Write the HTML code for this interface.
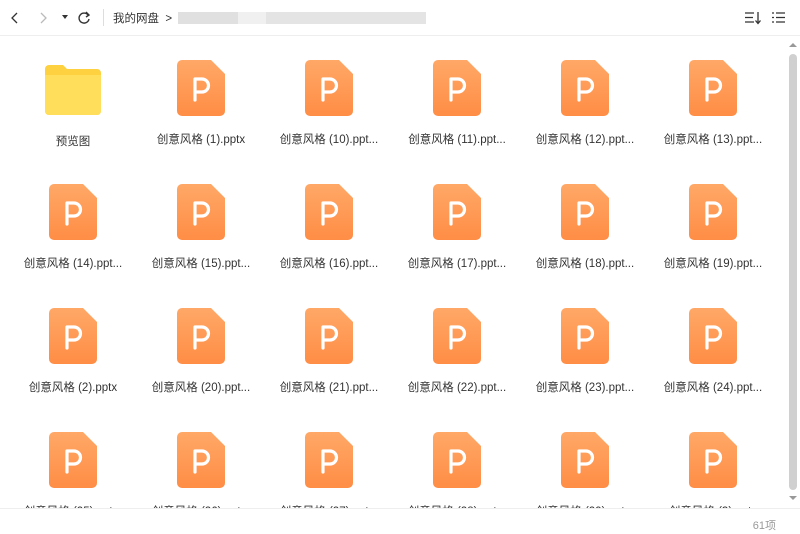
<!DOCTYPE html>
<html><head><meta charset="utf-8"><style>
*{margin:0;padding:0;box-sizing:border-box}
body{width:800px;height:534px;overflow:hidden;background:#fff;font-family:"Liberation Sans","Noto Sans CJK SC",sans-serif;color:#333;position:relative}
.top{position:absolute;left:0;top:0;width:800px;height:36px;border-bottom:1px solid #eee;background:#fff}
.crumb{position:absolute;left:113px;top:10px;font-size:11.5px;color:#333}
.blur{position:absolute;top:12px;height:12px;background:#e8e8e8}
.main{position:absolute;left:0;top:37px;width:786px;height:471px;overflow:hidden}
.it{position:absolute;width:128px;text-align:center;font-size:11.5px;color:#333;white-space:nowrap}
.it svg{display:block;margin:0 auto}
.bot{position:absolute;left:0;top:508px;width:800px;height:26px;border-top:1px solid #eee;background:#fff}
.cnt{position:absolute;right:24px;top:8px;font-size:11px;color:#999}
.sb{position:absolute;left:786px;top:37px;width:14px;height:471px;background:#fff}
.thumb{position:absolute;left:3px;top:17px;width:8px;height:436px;background:#d0d0d0;border-radius:4px}
</style></head><body>
<div class="top">
<svg style="position:absolute;left:8px;top:10px" width="14" height="16"><path d="M9 3 L4 8 L9 13" stroke="#333" stroke-width="1.3" fill="none"/></svg>
<svg style="position:absolute;left:36px;top:10px" width="14" height="16"><path d="M5 3 L10 8 L5 13" stroke="#bbb" stroke-width="1.3" fill="none"/></svg>
<svg style="position:absolute;left:61px;top:14px" width="8" height="6"><path d="M1 1 H7 L4 5Z" fill="#333"/></svg>
<svg style="position:absolute;left:76px;top:10px" width="16" height="16"><path d="M12 5 A5 5 0 1 0 13 9" stroke="#333" stroke-width="1.4" fill="none"/><path d="M10 2 L13 5 L10 7" stroke="#333" stroke-width="1.4" fill="none"/></svg>
<div style="position:absolute;left:103px;top:9px;width:1px;height:17px;background:#ddd"></div>
<div class="crumb">我的网盘 &nbsp;&gt;</div>
<div class="blur" style="left:178px;width:60px;background:#e0e0e0"></div>
<div class="blur" style="left:238px;width:28px;background:#f0f0f0"></div>
<div class="blur" style="left:266px;width:160px;background:#e4e4e4"></div>
<svg style="position:absolute;left:744px;top:11px" width="18" height="14"><path d="M1 2H10M1 6.5H9M1 11H10" stroke="#333" stroke-width="1.3"/><path d="M14 1V12M11.5 9.5L14 12.5L16.5 9.5" stroke="#333" stroke-width="1.3" fill="none"/></svg>
<svg style="position:absolute;left:771px;top:11px" width="16" height="14"><path d="M1 2H3M1 6.5H3M1 11H3M5 2H14M5 6.5H14M5 11H14" stroke="#333" stroke-width="1.3"/></svg>
</div>
<div class="main">
<div class="it" style="left:9px;top:24px"><svg width="60" height="56"><path d="M2 8a4 4 0 0 1 4-4h14l4 4h30a4 4 0 0 1 4 4v38a4 4 0 0 1-4 4H6a4 4 0 0 1-4-4z" fill="#fdd13f"/><path d="M2 14h56v36a4 4 0 0 1-4 4H6a4 4 0 0 1-4-4z" fill="#ffde5c"/></svg><div style="margin-top:16px">预览图</div></div>
</div>
<div class="bot"><div class="cnt">61项</div></div>
<div class="sb"><svg style="position:absolute;left:3px;top:5px" width="8" height="6"><path d="M0 5L4 1L8 5Z" fill="#999"/></svg><div class="thumb"></div><svg style="position:absolute;left:3px;top:458px" width="8" height="6"><path d="M0 1L4 5L8 1Z" fill="#999"/></svg></div>
<script>
var m=document.querySelector('.main');
var icon='<svg width="48" height="56"><defs><linearGradient id="g" x1="0" y1="0" x2="0" y2="1"><stop offset="0" stop-color="#ffa867"/><stop offset="1" stop-color="#ff8d45"/></linearGradient></defs><path d="M5 0H34L48 14V51a5 5 0 0 1-5 5H5a5 5 0 0 1-5-5V5a5 5 0 0 1 5-5z" fill="url(#g)"/><path d="M18 40V19h7a6.5 6.5 0 0 1 0 13h-7" stroke="#fff" stroke-width="3.2" fill="none" stroke-linecap="round" stroke-linejoin="round"/></svg>';
var names=["创意风格 (1).pptx","创意风格 (10).ppt...","创意风格 (11).ppt...","创意风格 (12).ppt...","创意风格 (13).ppt...","创意风格 (14).ppt...","创意风格 (15).ppt...","创意风格 (16).ppt...","创意风格 (17).ppt...","创意风格 (18).ppt...","创意风格 (19).ppt...","创意风格 (2).pptx","创意风格 (20).ppt...","创意风格 (21).ppt...","创意风格 (22).ppt...","创意风格 (23).ppt...","创意风格 (24).ppt...","创意风格 (25).ppt...","创意风格 (26).ppt...","创意风格 (27).ppt...","创意风格 (28).ppt...","创意风格 (29).ppt...","创意风格 (3).pptx"];
var h='';
for(var i=0;i<23;i++){var k=i+1,c=k%6,r=Math.floor(k/6);
h+='<div class="it" style="left:'+(9+c*128)+'px;top:'+(23+r*124)+'px">'+icon+'<div style="margin-top:15px">'+names[i]+'</div></div>';}
m.insertAdjacentHTML('beforeend',h);
</script>
</body></html>
